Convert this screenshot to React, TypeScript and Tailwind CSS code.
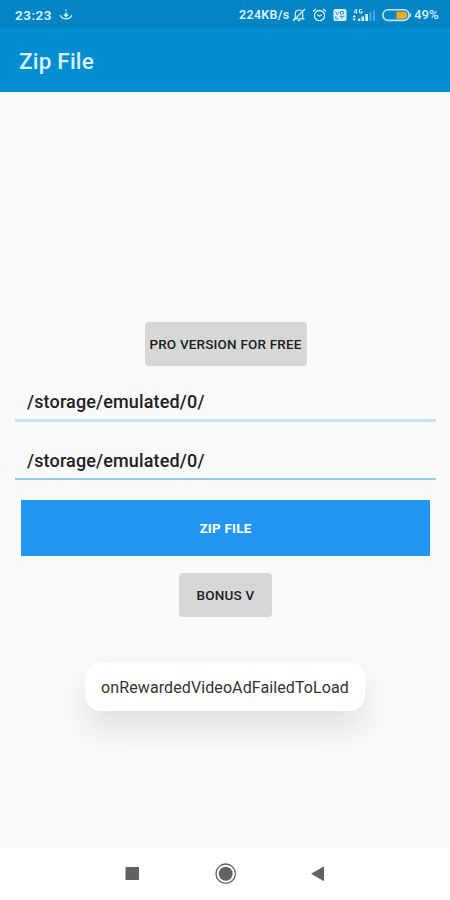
import { useState } from "react";

function DownloadIcon() {
    return (
        <svg className="ml-[7px] w-3.5 h-3" viewBox="0 0 14 12" fill="none" stroke="currentColor" strokeWidth="1.4">
            <path d="M7 .6v1.500M7 3.200v4.200M5 5.600l2 2 2-2M1.200 6.200C2.400 8.800 4.400 9.900 7 9.900s4.600-1.100 5.800-3.700" />
        </svg>
    )
}

function MutedBellIcon() {
    return (
        <svg className="w-3.5 h-3.5" viewBox="0 0 14 14" fill="none" stroke="currentColor" strokeWidth="1.2">
            <path d="M1.5 10.8h11M3.300 10.500V6c0-2.400 1.500-4 3.700-4s3.700 1.600 3.700 4v4.500M5.800 12.700h2.400M13 1 1 13" />
        </svg>
    )
}

function AlarmIcon() {
    return (
        <svg className="ml-1.5 w-[15px] h-3.5" viewBox="0 0 15 14" fill="none" stroke="currentColor" strokeWidth="1.3">
            <circle cx="7.5" cy="7.6" r="5.1" />
            <path d="M1 3.400 3.800 1M14 3.400 11.200 1M5.300 6.600 7.500 8.300 9.800 6.600" />
        </svg>
    )
}

function VolteIcon() {
    return (
        <svg className="ml-1.5 w-3.5 h-3.5" viewBox="0 0 14 14" fill="none">
            <rect x="0.500" y="1" width="13" height="12" rx="2" fill="currentColor" />
            <path d="M2.500 3.500 4.300 6.500 6 3.500M7.500 3.500h3v2.500h-3zM2.800 8v3h2.500M6.500 8.300h5M9 8.300v2.900" stroke="#0284c5" strokeWidth="0.800" />
        </svg>
    )
}

function SignalIcon() {
    return (
        <svg className="ml-[5px] w-6 h-3.5" viewBox="0 0 24 14" fill="currentColor">
            <path d="M4.300 1 2 4.300h3.300M4.600 1v4.700M10 1.500H7.500v3.500H10V3.500H8.800" fill="none" stroke="currentColor" strokeWidth="1" />
            <path d="M2.200 7 4 9.200H.4zM2.200 13 .4 10.500H4zM6 10.500h2.300V13H6zM9.500 8.500H12V13H9.500zM13.300 6h2.700v7h-2.700z" />
            <path d="M17.500 4h2v9h-2zM21 2.500h2V13h-2z" opacity="0.350" />
        </svg>
    )
}

function BatteryIcon() {
    return (
        <svg className="ml-1.5 w-[30px] h-3.5" viewBox="0 0 30 14" fill="none">
            <rect x="1" y="1.800" width="26" height="10.600" rx="5" stroke="#c4e6f5" strokeWidth="1.600" />
            <path d="M28.500 5.500v3.500" stroke="#c4e6f5" strokeWidth="1.300" />
            <path d="M14.500 3.700h7.300a3.500 3.500 0 0 1 0 7h-7.300z" fill="#faa91f" />
        </svg>
    )
}

export default function ZipFileScreen() {
    const [source, setSource] = useState<string>("/storage/emulated/0/");
    const [target, setTarget] = useState<string>("/storage/emulated/0/");

    return (
        <div className="flex flex-col w-[450px] h-[900px] bg-[#fafafa] font-['Roboto',sans-serif] text-[#212121] overflow-hidden">
            {/* status bar */}
            <div className="flex items-center h-7 pt-0.5 pl-[15px] pr-[11px] bg-[#0284c5] text-[#d9f1fb] text-[13.5px] font-semibold whitespace-nowrap">
                <span className="w-[37px] tracking-[0.5px]">23:23</span>
                <DownloadIcon />
                <span className="ml-auto w-[53px] text-[12.5px] tracking-[0.3px]">224KB/s</span>
                <MutedBellIcon />
                <AlarmIcon />
                <VolteIcon />
                <SignalIcon />
                <BatteryIcon />
                <span className="ml-0.5 w-[25px] text-[13.2px] font-medium">49%</span>
            </div>

            {/* app bar */}
            <header className="flex items-center h-16 pl-[19px] pt-[3px] bg-[#018ed1]">
                <h1 className="text-[22.5px] tracking-[0.2px] font-medium text-[#d9f1fb]">Zip File</h1>
            </header>

            <main className="flex flex-col items-center flex-1 pt-[230px] pl-[15px] pr-3.5">
                <button className="w-[162px] h-11 rounded-sm bg-[#d6d8d7] text-[13.5px] tracking-[0.18px] font-medium whitespace-nowrap">PRO VERSION FOR FREE</button>
                <input
                    className="w-full h-14 px-3 pt-[18px] border-b-3 border-[#c2e5ee] bg-transparent text-[18px] tracking-[0.15px] font-medium outline-none"
                    value={source}
                    onChange={(event) => setSource(event.target.value)}
                    title="Source"
                />
                <input
                    className="w-full h-[58px] px-3 pt-[21px] border-b-2 border-[#90cfee] bg-transparent text-[18px] tracking-[0.15px] font-medium outline-none"
                    value={target}
                    onChange={(event) => setTarget(event.target.value)}
                    title="Target"
                />
                <button className="w-[409px] h-14 mt-5 bg-[#2196f3] text-white text-[13.5px] tracking-[0.2px] font-bold">ZIP FILE</button>
                <button className="w-[93px] h-11 mt-[17px] rounded-sm bg-[#d6d8d7] text-[13.5px] tracking-[0.2px] font-medium">BONUS V</button>

                {/* toast */}
                <div className="flex items-center justify-center w-[280px] h-[49px] mt-[45px] mr-px pt-0.5 rounded-2xl bg-white text-[16px] tracking-[0.1px] text-[#333333] shadow-[0_18px_36px_rgba(0,0,0,0.11)]">
                    onRewardedVideoAdFailedToLoad
                </div>
            </main>

            {/* system navigation */}
            <nav className="flex items-center h-[52px] pl-[125px] bg-white text-[#626262]">
                <svg className="w-3.5 h-3.5" viewBox="0 0 14 14" fill="currentColor">
                    <rect x="0.500" y="0" width="13.500" height="13" />
                </svg>
                <svg className="ml-[76px] w-[22px] h-[22px]" viewBox="0 0 22 22" fill="currentColor">
                    <circle cx="10.700" cy="10.700" r="9.700" fill="none" stroke="currentColor" strokeWidth="1.300" />
                    <circle cx="10.700" cy="10.700" r="7" />
                </svg>
                <svg className="ml-[73px] w-3.5 h-4" viewBox="0 0 14 16" fill="currentColor">
                    <path d="M14 0.300v15L1 7.800z" />
                </svg>
            </nav>
        </div>
    )
}
